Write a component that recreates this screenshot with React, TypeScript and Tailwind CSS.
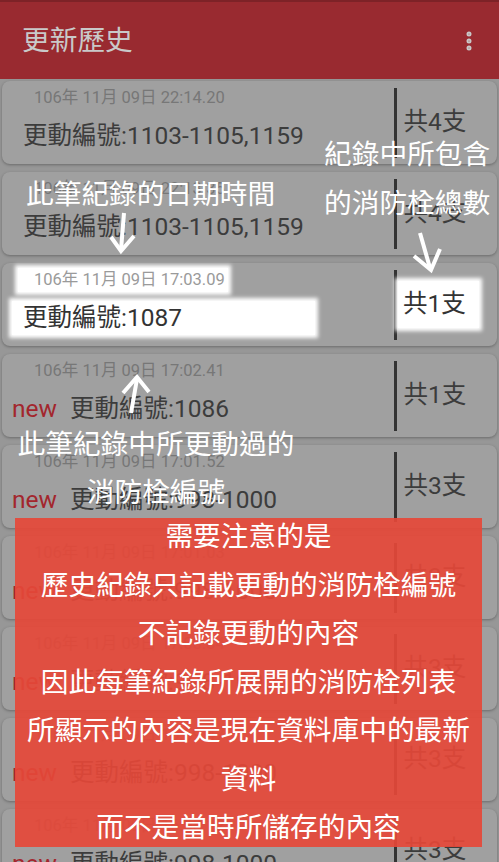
import { EllipsisVertical } from "lucide-react";

const rows = [
  { date: "106年 11月 09日 22:14.20", id: "1103-1105,1159", count: 4, isNew: false },
  { date: "106年 11月 09日 22:13.35", id: "1103-1105,1159", count: 4, isNew: false },
  { date: "106年 11月 09日 17:03.09", id: "1087", count: 1, isNew: false, focus: true },
  { date: "106年 11月 09日 17:02.41", id: "1086", count: 1, isNew: true },
  { date: "106年 11月 09日 17:01.52", id: "998-1000", count: 3, isNew: true },
  { date: "106年 11月 09日 17:01.03", id: "998-1000", count: 3, isNew: true },
  { date: "106年 11月 09日 17:00.34", id: "998-1000", count: 3, isNew: true },
  { date: "106年 11月 09日 16:59.47", id: "998-1000", count: 3, isNew: true },
  { date: "106年 11月 09日 16:58.12", id: "998-1000", count: 3, isNew: true },
];

const notes = [
  "需要注意的是",
  "歷史紀錄只記載更動的消防栓編號",
  "不記錄更動的內容",
  "因此每筆紀錄所展開的消防栓列表",
  "所顯示的內容是現在資料庫中的最新",
  "資料",
  "而不是當時所儲存的內容",
];

type Row = (typeof rows)[number] & { focus?: boolean };

const HistoryCard = ({ row }: { row: Row }) => (
  <div className="flex h-[83px] items-center rounded-lg bg-[#a0a0a0] shadow-[0_1px_3px_rgba(0,0,0,0.3)]">
    <div className="flex w-[392px] flex-col self-stretch">
      {row.focus ? (
        <div className="flex h-[34px] items-center pl-[16px]">
          <div className="flex h-[24px] w-[210px] items-center bg-white pl-[16px] text-[16.5px] text-[#9a9a9a] shadow-[0_0_4px_3px_#fff]">
            {row.date}
          </div>
        </div>
      ) : (
        <div className="flex h-[34px] items-center pl-[32px] text-[16.5px] text-[#777]">{row.date}</div>
      )}
      {row.focus ? (
        <div className="flex h-[42px] items-center pl-[10px]">
          <div className="flex h-[34px] w-[303px] items-center bg-white pl-[11px] text-[24.5px] text-[#333] shadow-[0_0_4px_3px_#fff]">
            更動編號:{row.id}
          </div>
        </div>
      ) : (
        <div className={`flex h-[42px] items-center text-[24.5px] text-[#3c3c3c] ${row.isNew ? "pl-[10px]" : "pl-[21px]"}`}>
          {row.isNew && <span className="w-[58px] text-[#a3262d]">new</span>}
          <span>更動編號:{row.id}</span>
        </div>
      )}
    </div>
    <div className="h-[70px] w-[2.5px] bg-[#333]" />
    {row.focus ? (
      <div className="ml-[1.5px] flex h-[47px] w-[81px] items-center bg-white pl-[5px] text-[24.5px] text-[#333] shadow-[0_0_4px_3px_#fff]">
        共{row.count}支
      </div>
    ) : (
      <div className="pl-[7px] text-[24.5px] text-[#3c3c3c]">共{row.count}支</div>
    )}
  </div>
);

const Arrow = ({ shaft, head }: { shaft: string; head: string }) => (
  <svg className="absolute inset-0" width="499" height="862" viewBox="0 0 499 862" fill="none">
    <path d={shaft} stroke="#fff" strokeWidth="4" />
    <path d={head} stroke="#fff" strokeWidth="4" strokeLinejoin="miter" />
  </svg>
);

export default function App() {
  return (
    <div className="relative h-[862px] w-[499px] overflow-hidden bg-[#979797] font-['Roboto','Noto_Sans_CJK_TC',sans-serif]">
      <header className="flex h-[79px] flex-col bg-[#992a30]">
        <div className="h-[2px] bg-[#7d2227]" />
        <div className="flex flex-1 items-center justify-between pl-[22px] pr-[18px]">
          <h1 className="text-[27.7px] font-normal text-[#c9c9c9]">更新歷史</h1>
          <EllipsisVertical className="h-[24px] w-[24px] text-[#c9c9c9]" strokeWidth={3} />
        </div>
      </header>

      <div className="flex flex-col gap-[8px] px-[2px] pt-[2px]">
        {rows.map((row, i) => (
          <HistoryCard key={i} row={row} />
        ))}
      </div>

      {/* tutorial overlay */}
      <div className="absolute left-[324px] top-[128px] text-[27.7px] leading-[49px] text-white font-['Noto_Sans_CJK_TC',sans-serif]">
        <p>紀錄中所包含</p>
        <p>的消防栓總數</p>
      </div>
      <p className="absolute left-[26px] top-[168px] text-[27.7px] leading-[48px] text-white font-['Noto_Sans_CJK_TC',sans-serif]">
        此筆紀錄的日期時間
      </p>
      <div className="absolute left-[17px] top-[418px] w-[278px] text-center text-[27.7px] leading-[48px] text-white font-['Noto_Sans_CJK_TC',sans-serif]">
        <p>此筆紀錄中所更動過的</p>
        <p>消防栓編號</p>
      </div>

      <Arrow shaft="M124 213 L121 250" head="M111 237 L121 251 L134 236" />
      <Arrow shaft="M420 233 L430 268" head="M414 256 L431 270 L440 249" />
      <Arrow shaft="M137 379 L131 413" head="M123 393 L137 377 L149 392" />

      <div className="absolute left-[15px] top-[518px] flex h-[329px] w-[467px] flex-col items-center gap-[16.5px] bg-[rgba(229,72,56,0.92)] text-[27.7px] leading-[32px] text-white font-['Noto_Sans_CJK_TC',sans-serif]">
        {notes.map((line) => (
          <p key={line}>{line}</p>
        ))}
      </div>
    </div>
  );
}
